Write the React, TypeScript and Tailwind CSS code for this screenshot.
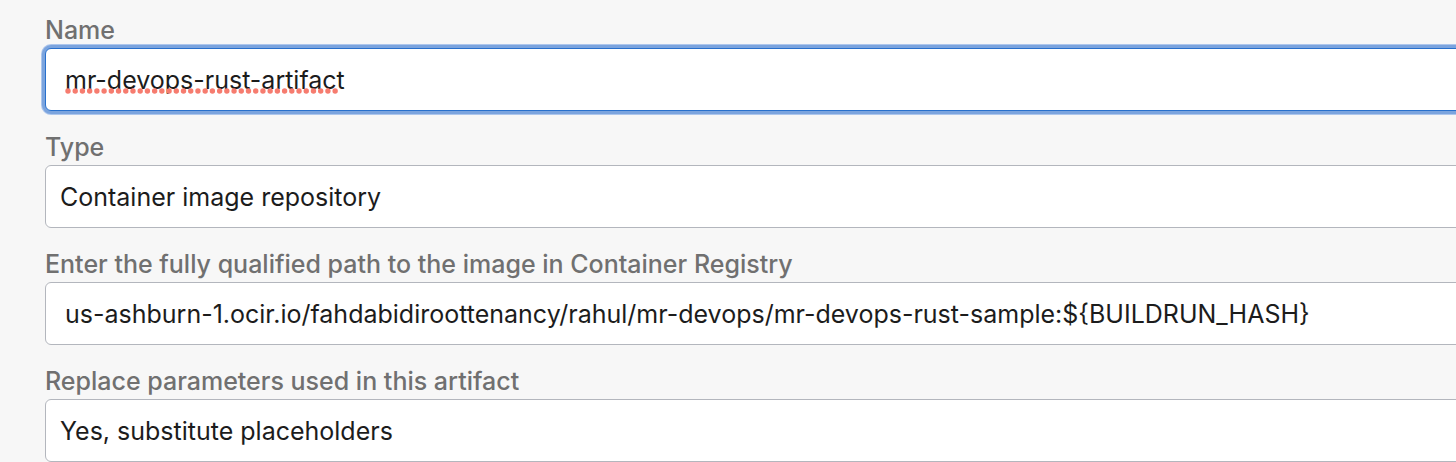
import React from "react";

const label = "block text-[25px] leading-[31px] pb-[2px] font-medium text-[#707070]";
const field =
  "block h-[63px] w-full appearance-none rounded-md border bg-white text-[25px] text-[#1c1c1c] outline-none";
const idle = "border-[#b3b6bd]";

export default function App() {
  return (
    <main className="h-screen overflow-hidden bg-[#f7f7f7] font-['Inter',sans-serif]">
      <form className="-mr-2 flex flex-col gap-[21px] pt-[15px] pl-[45px]">
        <div>
          <label htmlFor="name" className={label}>Name</label>
          <div className="relative">
            <input
              id="name"
              spellCheck={false}
              defaultValue="mr-devops-rust-artifact"
              className={`${field} border-[#2870cc] px-[19px] shadow-[0_0_0_3px_#7ba4de,0_0_0_4px_#adc6ec]`}
            />
            <svg className="absolute top-[40px] left-5" width="280" height="6" aria-hidden="true">
              <line x1="3" y1="3" x2="271" y2="3" stroke="#f67c6f" strokeWidth="5.4" strokeLinecap="round" strokeDasharray="0 7.22" />
            </svg>
          </div>
        </div>
        <div>
          <label htmlFor="type" className={label}>Type</label>
          <select id="type" className={`${field} ${idle} px-[14px] pt-[2px]`}>
            <option>Container image repository</option>
          </select>
        </div>
        <div>
          <label htmlFor="path" className={label}>
            Enter the fully qualified path to the image in Container Registry
          </label>
          <input
            id="path"
            spellCheck={false}
            defaultValue="us-ashburn-1.ocir.io/fahdabidiroottenancy/rahul/mr-devops/mr-devops-rust-sample:${BUILDRUN_HASH}"
            className={`${field} ${idle} px-[19px]`}
          />
        </div>
        <div>
          <label htmlFor="replace" className={label}>Replace parameters used in this artifact</label>
          <select id="replace" className={`${field} ${idle} px-[14px] pt-[2px]`}>
            <option>Yes, substitute placeholders</option>
          </select>
        </div>
      </form>
    </main>
  );
}
